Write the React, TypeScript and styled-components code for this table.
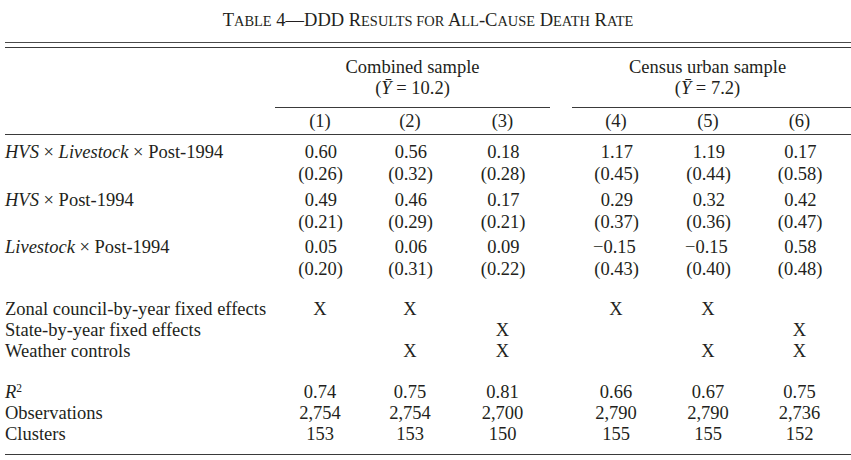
import React from "react";
import styled, { createGlobalStyle } from "styled-components";

const GlobalStyle = createGlobalStyle`
  html, body {
    margin: 0;
    padding: 0;
    background: #ffffff;
  }
  body {
    font-family: "Liberation Serif", "Times New Roman", serif;
    color: #231f20;
  }
`;

const Page = styled.div`
  width: 846px;
  margin-left: 5px;
  font-size: 18.5px;
`;

const Title = styled.h1`
  margin: 0 0 9.5px;
  padding-top: 9px;
  font-size: 18.5px;
  font-weight: normal;
  line-height: 22px;
  text-align: center;
  white-space: nowrap;
`;

const SmallCap = styled.span`
  font-size: 0.78em;
  text-transform: uppercase;
`;

const DoubleRule = styled.div`
  height: 4.5px;
  border-top: 1.5px solid #4a4a4a;
  border-bottom: 1.5px solid #3a3a3a;
`;

const Table = styled.table`
  width: 100%;
  border-collapse: separate;
  border-spacing: 0;
  table-layout: fixed;
  font-size: 18.5px;
  line-height: 21px;
`;

const Col = styled.col<{ $w: number }>`
  width: ${(p) => p.$w}px;
`;

const Row = styled.tr<{ $gap?: number; $pb?: number; $lh?: number; $rule?: boolean }>`
  & > td {
    padding: ${(p) => p.$gap ?? 0}px 0 ${(p) => p.$pb ?? 0}px;
    line-height: ${(p) => p.$lh ?? 21}px;
    border-bottom: ${(p) => (p.$rule ? "1.5px solid #3a3a3a" : "none")};
  }
`;

const Label = styled.td`
  text-align: left;
  white-space: nowrap;
  padding-left: 0;
`;

const Cell = styled.td<{ $last?: boolean }>`
  text-align: center;
  white-space: nowrap;
  && {
    padding-right: ${(p) => (p.$last ? 8 : 0)}px;
  }
`;

const GroupHead = styled.td<{ $last?: boolean }>`
  text-align: center;
  white-space: nowrap;
  && {
    padding-top: 8.5px;
    padding-bottom: 8px;
    padding-right: ${(p) => (p.$last ? 8 : 0)}px;
    border-bottom: 1px solid #3a3a3a;
  }
`;

const Line = styled.div`
  line-height: 21px;
`;

const NumBox = styled.span<{ $coef?: boolean }>`
  display: inline-block;
  width: 46px;
  text-align: right;
  padding-right: ${(p) => (p.$coef ? 6 : 0)}px;
  box-sizing: border-box;
`;

const Em = styled.i`
  font-style: italic;
`;

const Sup = styled.sup`
  font-size: 0.62em;
  line-height: 0;
  vertical-align: 0.5em;
`;

const widths = [270, 90, 90, 95, 22, 88, 96, 95];

type Estimate = {
  label: React.ReactNode;
  coef: string[];
  se: string[];
  gap: number;
};

const estimates: Estimate[] = [
  {
    label: (
      <>
        <Em>HVS</Em> × <Em>Livestock</Em> × Post-1994
      </>
    ),
    coef: ["0.60", "0.56", "0.18", "1.17", "1.19", "0.17"],
    se: ["(0.26)", "(0.32)", "(0.28)", "(0.45)", "(0.44)", "(0.58)"],
    gap: 7,
  },
  {
    label: (
      <>
        <Em>HVS</Em> × Post-1994
      </>
    ),
    coef: ["0.49", "0.46", "0.17", "0.29", "0.32", "0.42"],
    se: ["(0.21)", "(0.29)", "(0.21)", "(0.37)", "(0.36)", "(0.47)"],
    gap: 5,
  },
  {
    label: (
      <>
        <Em>Livestock</Em> × Post-1994
      </>
    ),
    coef: ["0.05", "0.06", "0.09", "\u22120.15", "\u22120.15", "0.58"],
    se: ["(0.20)", "(0.31)", "(0.22)", "(0.43)", "(0.40)", "(0.48)"],
    gap: 4,
  },
];

const controls = [
  { label: "Zonal council-by-year fixed effects", marks: [true, true, false, true, true, false], gap: 19 },
  { label: "State-by-year fixed effects", marks: [false, false, true, false, false, true], gap: 0 },
  { label: "Weather controls", marks: [false, true, true, false, true, true], gap: 0 },
];

const stats = [
  {
    label: (
      <>
        <Em>R</Em>
        <Sup>2</Sup>
      </>
    ),
    values: ["0.74", "0.75", "0.81", "0.66", "0.67", "0.75"],
    gap: 20,
  },
  { label: "Observations", values: ["2,754", "2,754", "2,700", "2,790", "2,790", "2,736"], gap: 0 },
  { label: "Clusters", values: ["153", "153", "150", "155", "155", "152"], gap: 0 },
];

// six value columns with an empty spacer between the two samples
const ValueCells = ({ items }: { items: React.ReactNode[] }) => (
  <>
    {items.slice(0, 3).map((v, i) => (
      <Cell key={i}>{v}</Cell>
    ))}
    <Cell />
    {items.slice(3).map((v, i) => (
      <Cell key={i + 3} $last={i === 2}>
        {v}
      </Cell>
    ))}
  </>
);

const App = () => {
  return (
    <Page>
      <GlobalStyle />
      <Title>
        T<SmallCap>able</SmallCap> 4—DDD R<SmallCap>esults for</SmallCap> A<SmallCap>ll</SmallCap>-C
        <SmallCap>ause</SmallCap> D<SmallCap>eath</SmallCap> R<SmallCap>ate</SmallCap>
      </Title>
      <DoubleRule />
      <Table>
        <colgroup>
          {widths.map((w, i) => (
            <Col key={i} $w={w} />
          ))}
        </colgroup>
        <thead>
          <Row>
            <Label />
            <GroupHead colSpan={3}>
              <Line>Combined sample</Line>
              <Line>
                (<Em>Ȳ</Em> = 10.2)
              </Line>
            </GroupHead>
            <Cell />
            <GroupHead colSpan={3} $last>
              <Line>Census urban sample</Line>
              <Line>
                (<Em>Ȳ</Em> = 7.2)
              </Line>
            </GroupHead>
          </Row>
          <Row $gap={3} $pb={2.5} $rule>
            <Label />
            <ValueCells items={["(1)", "(2)", "(3)", "(4)", "(5)", "(6)"]} />
          </Row>
        </thead>
        <tbody>
          {estimates.map((e, i) => (
            <React.Fragment key={i}>
              <Row $gap={e.gap} $lh={21.5}>
                <Label>{e.label}</Label>
                <ValueCells items={e.coef.map((c) => <NumBox $coef>{c}</NumBox>)} />
              </Row>
              <Row $lh={21.5}>
                <Label />
                <ValueCells items={e.se.map((s) => <NumBox>{s}</NumBox>)} />
              </Row>
            </React.Fragment>
          ))}
          {controls.map((c, i) => (
            <Row key={i} $gap={c.gap}>
              <Label>{c.label}</Label>
              <ValueCells items={c.marks.map((m) => (m ? "X" : ""))} />
            </Row>
          ))}
          {stats.map((s, i) => (
            <Row key={i} $gap={s.gap} $pb={i === stats.length - 1 ? 8.5 : 0} $rule={i === stats.length - 1}>
              <Label>{s.label}</Label>
              <ValueCells items={s.values} />
            </Row>
          ))}
        </tbody>
      </Table>
    </Page>
  );
};

export default App;
